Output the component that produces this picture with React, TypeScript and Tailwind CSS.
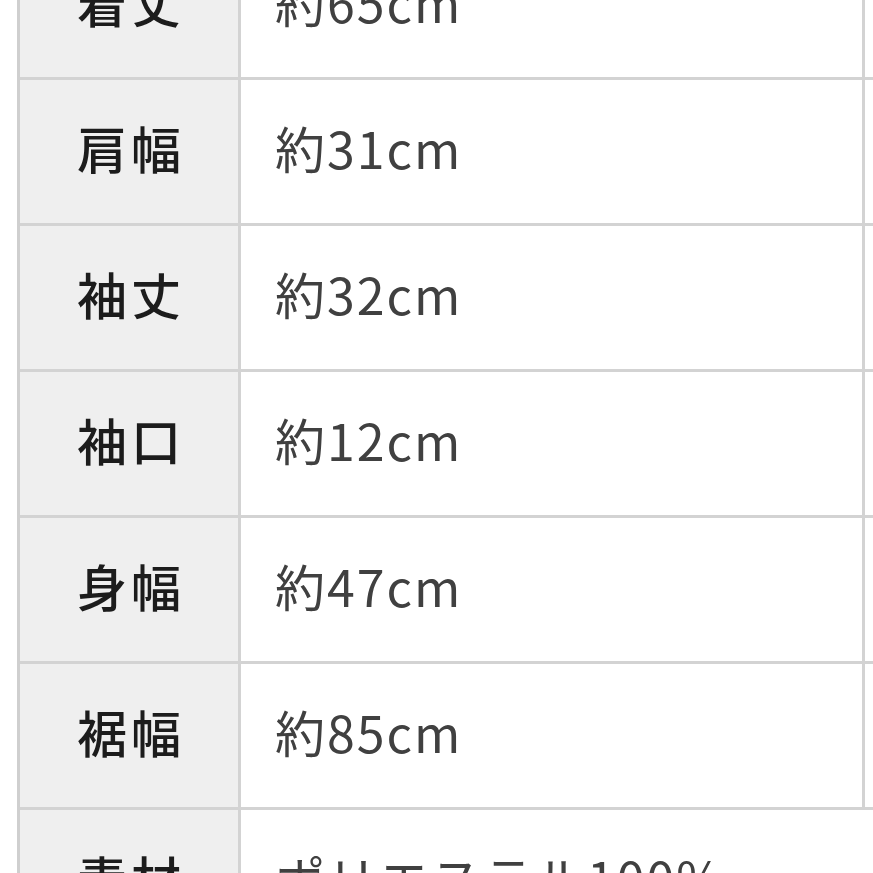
const rows: [string, string][] = [
  ["着丈", "約65cm"],
  ["肩幅", "約31cm"],
  ["袖丈", "約32cm"],
  ["袖口", "約12cm"],
  ["身幅", "約47cm"],
  ["裾幅", "約85cm"],
  ["素材", "ポリエステル100%"],
];

export default function App() {
  return (
    <div
      className="w-[873px] h-[873px] overflow-hidden bg-white"
      style={{ fontFamily: '"Noto Sans CJK JP", "Noto Sans", sans-serif' }}
    >
      <div className="ml-[17px] mt-[-66px] border-l-[3px] border-[#cfcfcf]">
        {rows.map(([k, v], i) => {
          const last = i === rows.length - 1;
          return (
            <div key={k} className="flex h-[146px] border-b-[3px] border-[#d3d3d3]">
              <div className="w-[221px] shrink-0 bg-[#efefef] border-r-[3px] border-[#d3d3d3] flex items-center justify-center pl-[4px] pb-[9px] text-[50px] leading-none text-[#1c1c1c] font-medium tracking-[4px]">
                {k}
              </div>
              {last ? (
                <div className="flex-1 flex items-center pl-[34px] pb-[9px] text-[50px] leading-none text-[#404040] tracking-[2px] whitespace-nowrap">
                  {v}
                </div>
              ) : (
                <div className="w-[624px] shrink-0 border-r-[3px] border-[#d3d3d3] flex items-center pl-[34px] pb-[9px] text-[50px] leading-none text-[#404040] tracking-[2px]">
                  {v}
                </div>
              )}
            </div>
          );
        })}
      </div>
    </div>
  );
}
